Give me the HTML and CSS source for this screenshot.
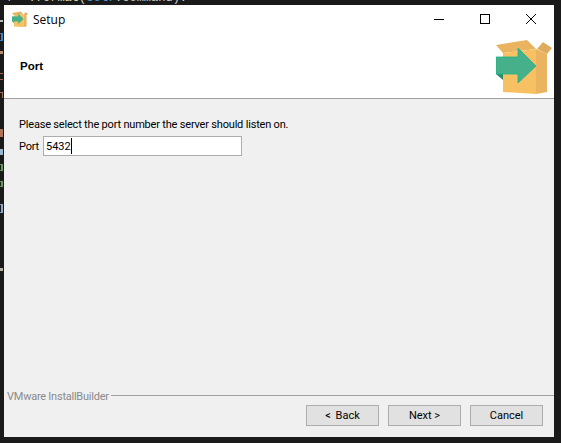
FILE: index.html
```html
<!DOCTYPE html>
<html lang="en">
<head>
<meta charset="utf-8">
<title>Setup</title>
<link rel="stylesheet" href="styles.css">
</head>
<body>
<div class="backdrop-code">r' .<span class="fmt">format</span>(<span class="self">self</span>.command).</div>
<div class="code-bits">
  <i class="bit b1"></i><i class="bit b2"></i><i class="bit b3"></i><i class="bit b4"></i>
  <i class="bit b5"></i><i class="bit b6"></i><i class="bit b7"></i><i class="bit b8"></i>
  <i class="bit b9"></i><i class="bit b10"></i><i class="bit b11"></i>
</div>
<main class="window">
  <header class="banner">
    <div class="titlebar">
      <svg class="app-icon" viewBox="0 0 56 56" aria-hidden="true">
        <use href="#box"></use>
      </svg>
      <span class="title">Setup</span>
      <div class="controls">
        <svg class="ctl" viewBox="0 0 46 28"><path d="M18 14.500h10" stroke="#000" stroke-width="1"/></svg>
        <svg class="ctl" viewBox="0 0 46 28"><rect x="18.500" y="9.500" width="9" height="9" fill="none" stroke="#000"/></svg>
        <svg class="ctl" viewBox="0 0 46 28"><path d="M18 9l10 10M28 9l-10 10" stroke="#000" stroke-width="1" fill="none"/></svg>
      </div>
    </div>
    <div class="banner-row">
      <h1 class="heading">Port</h1>
      <svg class="logo" viewBox="0 0 56 56" aria-hidden="true">
        <defs>
          <symbol id="box" viewBox="0 0 56 56">
            <path d="M0 7L31 2L40 11L7 15Z" fill="#e9b35f"/>
            <path d="M41 11L47 4L56 10L51 16Z" fill="#dfab5c"/>
            <path d="M7 15L40 11V56L7 54Z" fill="#f7c163"/>
            <path d="M40 11L51 16V54L40 56Z" fill="#e9b35f"/>
            <path d="M0 36L7 42V36Z" fill="#2c8b6a"/>
            <path d="M0 19H22V10L40 28L22 45V36H0Z" fill="#45b08a" stroke="#1fb48c" stroke-width=".8"/>
          </symbol>
        </defs>
        <use href="#box"></use>
      </svg>
    </div>
  </header>
  <section class="content">
    <p class="prompt">Please select the port number the server should listen on.</p>
    <label class="port-row">
      <span class="port-label">Port</span>
      <span class="input"><span class="value">5432</span><i class="caret"></i></span>
    </label>
  </section>
  <footer class="footer">
    <div class="brand-row">
      <span class="brand">VMware InstallBuilder</span>
      <span class="rule"></span>
    </div>
    <div class="buttons">
      <button class="btn btn-back" type="button">&lt; Back</button>
      <button class="btn" type="button">Next &gt;</button>
      <button class="btn" type="button">Cancel</button>
    </div>
  </footer>
</main>
</body>
</html>
```

FILE: styles.css
```css
* { box-sizing: border-box; }
html, body { height: 100%; }
body {
  margin: 0;
  padding: 5px 7px 6px 4px;
  background: #1a1a1a;
  overflow: hidden;
  position: relative;
  font-family: Roboto, "Liberation Sans", Arial, sans-serif;
  font-size: 11px;
  color: #000;
}
.backdrop-code {
  position: absolute;
  left: 7px;
  top: -9px;
  font: 12px/14px "Liberation Mono", monospace;
  color: #c8c8c8;
  white-space: pre;
}
.fmt { color: #dcdcaa; }
.self { color: #569cd6; }
.code-bits { position: absolute; left: 0; top: 0; }
.bit { position: absolute; left: 0; width: 3px; display: block; }
.b1 { top: 20px; height: 2px; background: #b9b9b9; }
.b2 { top: 33px; height: 8px; border: solid #3f7fc0; border-width: 1px 2px 1px 0; }
.b3 { top: 51px; height: 3px; background: #b98a70; }
.b4 { top: 73px; height: 7px; border: solid #a5694c; border-width: 1px 0 1px 0; }
.b5 { top: 92px; height: 6px; border: solid #a5694c; border-width: 1px 1px 0 0; }
.b6 { top: 129px; height: 8px; background: #b07458; }
.b7 { top: 149px; height: 6px; background: #9cb6cc; }
.b8 { top: 164px; height: 7px; border: solid #5f9c55; border-width: 1px 2px 1px 0; }
.b9 { top: 181px; height: 6px; border: solid #5f9c55; border-width: 1px 2px 1px 0; }
.b10 { top: 204px; height: 9px; border: solid #8ba6c9; border-width: 1px 2px 1px 0; }
.b11 { top: 268px; height: 3px; background: #b9b0a0; }
.window {
  position: relative;
  height: 432px;
  display: flex;
  flex-direction: column;
  background: #f0f0f0;
}
.banner {
  height: 94px;
  background: #fff;
  border-bottom: 1px solid #a0a0a0;
  display: flex;
  flex-direction: column;
}
.titlebar {
  height: 28px;
  display: flex;
  align-items: center;
  padding-left: 8px;
}
.app-icon { width: 16px; height: 16px; margin-right: 5px; }
.title { font: 12px "Open Sans", sans-serif; }
.controls { margin-left: auto; display: flex; }
.ctl { width: 46px; height: 28px; display: block; }
.banner-row {
  flex: 1;
  display: flex;
  align-items: flex-start;
  justify-content: space-between;
  padding: 5px 2px 0 16px;
}
.heading {
  margin: 22px 0 0;
  font-family: "Liberation Sans", Arial, sans-serif;
  font-size: 11.5px;
  font-weight: 700;
}
.logo { width: 56px; height: 56px; display: block; }
.content { flex: 1; padding: 19px 0 0 15px; }
.prompt { margin: 0 0 4px; line-height: 14px; letter-spacing: -0.19px; }
.port-row { display: flex; align-items: center; }
.port-label { width: 24px; letter-spacing: -0.2px; }
.input {
  width: 199px;
  height: 20px;
  padding-left: 2px;
  background: #fff;
  border: 1px solid #adadad;
  display: flex;
  align-items: center;
}
.caret { width: 1px; height: 16px; background: #000; }
.footer { height: 43px; }
.brand-row { display: flex; align-items: flex-start; height: 9px; }
.brand { color: #8a8a8a; padding: 0 2px 0 3px; line-height: 14px; margin-top: -4px; letter-spacing: -0.24px; }
.rule { flex: 1; height: 1px; background: #a0a0a0; margin-top: 1px; }
.buttons {
  display: flex;
  justify-content: flex-end;
  gap: 9px;
  padding: 2px 11px 0 0;
}
.btn {
  width: 73px;
  height: 21px;
  padding: 0;
  background: #e1e1e1;
  border: 1px solid #adadad;
  font: inherit;
  color: #000;
}
.btn-back { word-spacing: 2px; }
```
